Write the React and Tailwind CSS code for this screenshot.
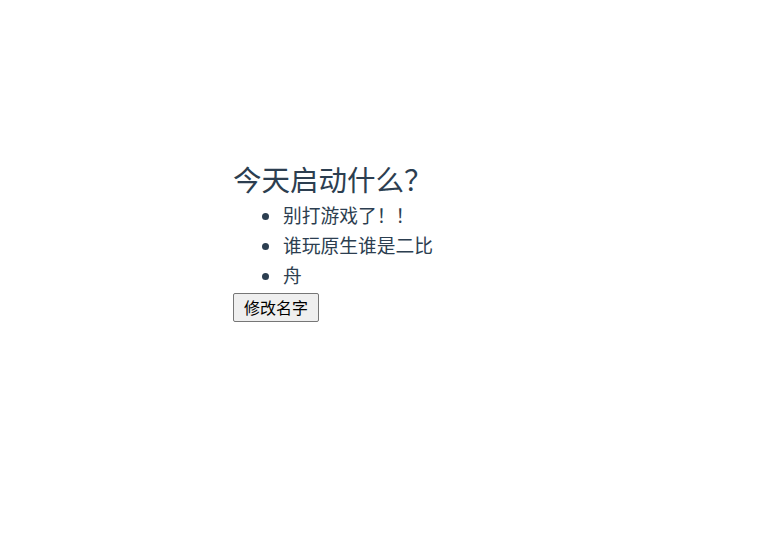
import React from "react";

const items = ["别打游戏了！！", "谁玩原生谁是二比", "舟"];

export default function App() {
  return (
    <div
      className="min-h-[542px] w-[778px] bg-white pl-[233px] pt-[160px] text-[#2c3e50]"
      style={{ fontFamily: '"Noto Sans CJK SC", "Liberation Sans", sans-serif' }}
    >
      <h1 className="text-[28.5px] leading-[38px]">今天启动什么？</h1>
      <ul className="mt-[2px] list-disc pl-[50px] text-[18.75px] leading-[30px]">
        {items.map((t) => (
          <li key={t}>{t}</li>
        ))}
      </ul>
      <button
        type="button"
        className="mt-[3px] inline-flex h-[29px] items-center rounded-[2px] border border-[#767676] bg-[#efefef] px-[10px] pb-[2px] text-[16px] leading-none text-black"
      >
        修改名字
      </button>
    </div>
  );
}
